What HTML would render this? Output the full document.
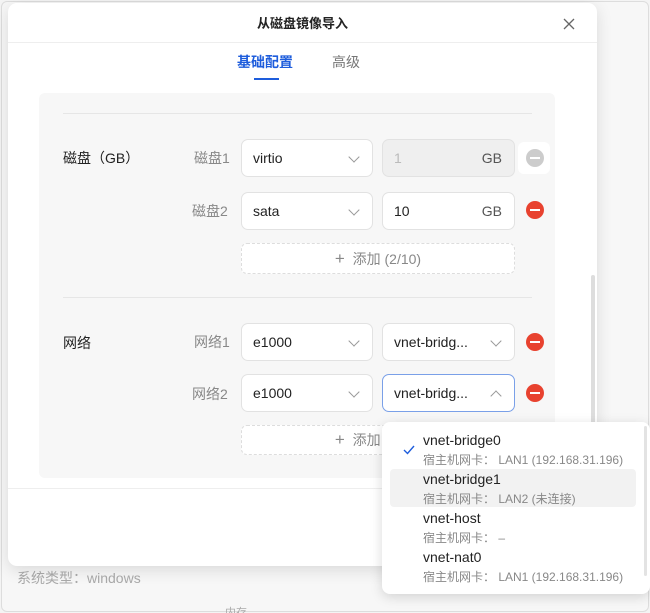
<!DOCTYPE html>
<html><head><meta charset="utf-8"><style>
*{box-sizing:border-box;margin:0;padding:0}
html,body{width:650px;height:613px;overflow:hidden}
body{background:#f4f4f4;font-family:"Liberation Sans","Noto Sans CJK SC",sans-serif;position:relative}
.frame{position:absolute;left:1px;top:1px;width:648px;height:611px;border:1px solid #ddd;border-radius:6px;background:#f7f7f7}
.abs{position:absolute}
.modal{position:absolute;left:8px;top:3px;width:589px;height:563px;background:#fff;border-radius:9px;box-shadow:0 4px 16px rgba(0,0,0,.12)}
.sel{position:absolute;height:38px;border:1px solid #e2e2e2;border-radius:7px;background:#fff;font-size:14px;color:#222;padding-left:11px;line-height:36px}
.chev{position:absolute;right:14px;top:13px;width:8px;height:8px;border-right:1.3px solid #999;border-bottom:1.3px solid #999;transform:rotate(45deg)}
.up{transform:rotate(-135deg);top:17px}
.lbl{position:absolute;font-size:14px;color:#888}
.minus{position:absolute;width:18px;height:18px;border-radius:50%;background:#e8422f}
.minus:after{content:"";position:absolute;left:4px;top:8px;width:10px;height:2px;background:#fff}
.add{position:absolute;border:1px dashed #ddd;border-radius:6px;font-size:14px;color:#888;text-align:center;background:#fff}
.it{position:absolute;left:8px;width:246px;height:38px;border-radius:4px}
.it b{position:absolute;left:33px;top:2px;font-weight:normal;font-size:14px;color:#222}
.it i{position:absolute;left:33px;top:21px;font-style:normal;font-size:12px;color:#888}
</style></head><body>
<div class="frame"></div>
<div class="abs" style="left:17px;top:568px;font-size:14px;color:#aaa">系统类型：windows</div>
<div class="abs" style="left:225px;top:604px;font-size:11px;color:#aaa">内存</div>
<div class="modal">
 <div class="abs" style="left:0;top:10px;width:589px;text-align:center;font-size:13px;font-weight:bold;color:#222">从磁盘镜像导入</div>
 <svg class="abs" style="left:555px;top:15px" width="12" height="12"><path d="M1 1L11 11M11 1L1 11" stroke="#666" stroke-width="1.3"/></svg>
 <div class="abs" style="left:0;top:39px;width:589px;height:1px;background:#eee"></div>
 <div class="abs" style="left:229px;top:49px;font-size:14px;font-weight:bold;color:#1e5ddc">基础配置</div>
 <div class="abs" style="left:324px;top:49px;font-size:14px;color:#777">高级</div>
 <div class="abs" style="left:246px;top:75px;width:25px;height:2px;background:#1e5ddc"></div>
 <div class="abs" style="left:31px;top:90px;width:516px;height:385px;background:#f7f7f7;border-radius:6px"></div>
 <div class="abs" style="left:55px;top:110px;width:469px;height:1px;background:#e6e6e6"></div>
 <div class="abs" style="left:55px;top:294px;width:469px;height:1px;background:#e6e6e6"></div>
 <div class="abs" style="left:55px;top:145px;font-size:14px;color:#222">磁盘（GB）</div>
 <div class="abs" style="left:55px;top:330px;font-size:14px;color:#222">网络</div>
 <div class="abs" style="left:0;top:485px;width:589px;height:1px;background:#eee"></div>
 <div class="abs" style="left:583px;top:272px;width:4px;height:155px;border-radius:2px;background:#ddd"></div>
</div>
<div class="lbl" style="left:194px;top:148px">磁盘1</div>
<div class="sel" style="left:241px;top:139px;width:132px">virtio<span class="chev"></span></div>
<div class="sel" style="left:382px;top:139px;width:133px;background:#efefef;color:#bbb">1<span style="position:absolute;right:12px;color:#555">GB</span></div>
<div class="abs" style="left:518px;top:142px;width:32px;height:32px;background:#fff;border-radius:6px"></div>
<div class="minus" style="left:526px;top:149px;background:#ccc"></div>
<div class="lbl" style="left:192px;top:201px">磁盘2</div>
<div class="sel" style="left:241px;top:192px;width:132px">sata<span class="chev"></span></div>
<div class="sel" style="left:382px;top:192px;width:133px">10<span style="position:absolute;right:12px;color:#555">GB</span></div>
<div class="minus" style="left:526px;top:201px"></div>
<div class="add" style="left:241px;top:243px;width:274px;height:31px;line-height:29px"><span style="font-size:17px">+</span>&nbsp; 添加 (2/10)</div>
<div class="lbl" style="left:194px;top:332px">网络1</div>
<div class="sel" style="left:241px;top:323px;width:132px">e1000<span class="chev"></span></div>
<div class="sel" style="left:382px;top:323px;width:133px">vnet-bridg...<span class="chev"></span></div>
<div class="minus" style="left:526px;top:333px"></div>
<div class="lbl" style="left:192px;top:384px">网络2</div>
<div class="sel" style="left:241px;top:374px;width:132px">e1000<span class="chev"></span></div>
<div class="sel" style="left:382px;top:374px;width:133px;border-color:#7aa0e8">vnet-bridg...<span class="chev up"></span></div>
<div class="minus" style="left:526px;top:384px"></div>
<div class="add" style="left:241px;top:425px;width:274px;height:30px;line-height:28px"><span style="font-size:17px">+</span>&nbsp; 添加 (2/10)</div>
<div class="abs" style="left:382px;top:422px;width:268px;height:172px;background:#fff;border-radius:8px;box-shadow:0 3px 12px rgba(0,0,0,.15);overflow:hidden">
 <div class="abs" style="right:3px;top:4px;width:3px;height:150px;background:#e3e3e3;border-radius:2px"></div>
 <div class="it" style="top:8px"><svg class="abs" style="left:13px;top:15px" width="12" height="10"><path d="M1 5L4.5 8.5L11 1" stroke="#1e5ddc" stroke-width="1.4" fill="none"/></svg><b>vnet-bridge0</b><i>宿主机网卡：&nbsp;LAN1 (192.168.31.196)</i></div>
 <div class="it" style="top:47px;background:#f2f2f2"><b>vnet-bridge1</b><i>宿主机网卡：&nbsp;LAN2 (未连接)</i></div>
 <div class="it" style="top:86px"><b>vnet-host</b><i>宿主机网卡：&nbsp;–</i></div>
 <div class="it" style="top:125px"><b>vnet-nat0</b><i>宿主机网卡：&nbsp;LAN1 (192.168.31.196)</i></div>
</div>
</body></html>
